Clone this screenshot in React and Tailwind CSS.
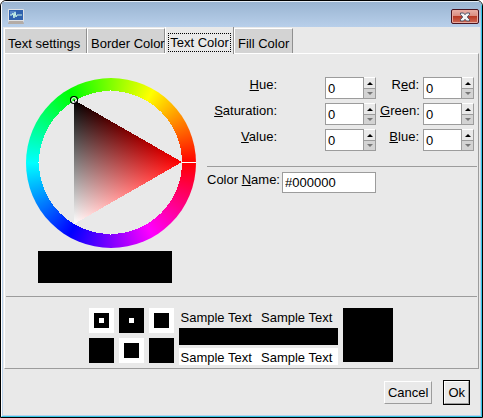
import React, { useState } from "react";

function AppIcon() {
  return (
    <svg width="16" height="16" viewBox="0 0 16 16" aria-hidden="true">
      <rect x="0" y="0" width="16" height="13" rx="1" fill="#dfe2e5" />
      <rect x="1" y="1" width="14" height="10" fill="#2f62ae" />
      <rect x="2" y="2" width="6" height="4" fill="#5585c6" />
      <path d="M1 12h14l1 3H0z" fill="#b4aca6" />
      <path d="M2 6h2l1-2 1 5 1-6 1 5 1-2h5" fill="none" stroke="#c9f3e6" strokeWidth="1" />
    </svg>
  );
}

function CloseIcon() {
  return (
    <svg width="12" height="10" viewBox="0 0 12 10" aria-hidden="true">
      <path
        d="M1.5 1h3L6 2.7 7.5 1h3v1.5L8.3 5l2.2 2.5V9h-3L6 7.3 4.5 9h-3V7.5L3.7 5 1.5 2.5z"
        fill="#f4f4f4"
        stroke="#4c5468"
        strokeWidth="1"
      />
    </svg>
  );
}

function TitleBar() {
  return (
    <header className="flex h-[25px] shrink-0 items-center justify-between bg-linear-to-b from-[#9ab5d2] to-[#b8cfea] pt-[4px] pr-[2px] pl-[6px]">
      <AppIcon />
      <button
        type="button"
        aria-label="Close"
        className="flex h-[15px] w-[28px] items-center justify-center rounded-[2px] border border-[#4a1420] bg-[linear-gradient(#e8b0a8,#d98a7e_48%,#b83a26_50%,#cf6a56)] shadow-[inset_0_0_0_1px_#e8aaa0]"
      >
        <CloseIcon />
      </button>
    </header>
  );
}

const TABS = [
  { name: "Text settings", width: "w-[83px]" },
  { name: "Border Color", width: "w-[78px]" },
  { name: "Text Color", width: "w-[69px]" },
  { name: "Fill Color", width: "w-[59px]" },
];

function Tabs() {
  const [active, setActive] = useState("Text Color");
  return (
    <nav role="tablist" className="flex h-[26px] shrink-0 items-end pl-px">
      {TABS.map(({ name, width }) =>
        name === active ? (
          <button
            key={name}
            type="button"
            role="tab"
            aria-selected="true"
            className={
              "relative -mb-px h-[27px] border-r border-l border-r-[#909090] border-l-white bg-[#e9e9e9] px-[2px] pt-[4px] whitespace-nowrap " +
              width
            }
          >
            <span className="block h-[19px] border border-dotted border-black leading-[17px]">{name}</span>
          </button>
        ) : (
          <button
            key={name}
            type="button"
            role="tab"
            aria-selected="false"
            onClick={() => setActive(name)}
            className={
              "h-[25px] border-t border-r border-l border-t-white border-r-[#909090] border-l-white bg-[#d3d3d3] pt-[5px] pl-[3px] text-left whitespace-nowrap " +
              width
            }
          >
            {name}
          </button>
        ),
      )}
    </nav>
  );
}

function ColorWheel() {
  return (
    <div className="size-[170px] rounded-full bg-[conic-gradient(from_90deg,#f00,#f0f,#00f,#0ff,#0f0,#ff0,#f00)]">
      <svg width="170" height="170" viewBox="0 0 170 170" role="img" aria-label="Hue wheel">
        <defs>
          <linearGradient id="red" gradientUnits="userSpaceOnUse" x1="48" y1="22" x2="102" y2="115">
            <stop offset="0" stopColor="#000" />
            <stop offset="1" stopColor="#f00" />
          </linearGradient>
          <linearGradient id="cyan" gradientUnits="userSpaceOnUse" x1="102" y1="53" x2="48" y2="146">
            <stop offset="0" stopColor="#000" />
            <stop offset="1" stopColor="#0ff" />
          </linearGradient>
        </defs>
        <circle cx="84.5" cy="84.5" r="71.5" fill="#e9e9e9" shapeRendering="crispEdges" />
        <g className="isolate" shapeRendering="crispEdges">
          <path d="M48 22L156 84L48 146z" fill="url(#red)" />
          <path d="M48 22L156 84L48 146z" fill="url(#cyan)" className="mix-blend-screen" />
        </g>
        <rect x="156" y="84" width="14" height="1" fill="#fff" />
        <path d="M84 12h1v1h-1zM84 156h1v1h-1zM12 84h1v1h-1z" fill="#fff" />
        <circle cx="48" cy="22" r="3.5" fill="none" stroke="#000" strokeWidth="1.2" />
        <circle cx="48" cy="22" r="2.3" fill="none" stroke="#fff" />
      </svg>
    </div>
  );
}

function Arrow({ down }) {
  return (
    <svg width="6" height="3" viewBox="0 0 6 3" aria-hidden="true">
      {down ? <path d="M0 0h6L3 3z" fill="#777" /> : <path d="M0 3h6L3 0z" fill="#000" />}
    </svg>
  );
}

function Spin({ id, name, before, hot, after }) {
  const [value, setValue] = useState(0);
  return (
    <>
      <label htmlFor={id} className="text-right leading-[16px] whitespace-nowrap">
        {before}
        <u>{hot}</u>
        {after}
      </label>
      <div className="flex h-[22px]">
        <input
          id={id}
          type="text"
          value={value}
          onChange={(e) => setValue(Number(e.target.value) || 0)}
          className="h-[22px] w-[39px] rounded-none border border-[#9c9c9c] bg-white px-[2px] outline-none"
        />
        <div className="flex w-[12px] flex-col">
          <button
            type="button"
            aria-label={"Increase " + name}
            onClick={() => setValue(value + 1)}
            className="flex h-[11px] items-center justify-center border-t border-r border-t-white border-r-[#9c9c9c]"
          >
            <Arrow />
          </button>
          <button
            type="button"
            aria-label={"Decrease " + name}
            onClick={() => setValue(Math.max(0, value - 1))}
            className="flex h-[11px] items-center justify-center border-t border-r border-b border-[#9c9c9c] bg-[#d3d3d3]"
          >
            <Arrow down />
          </button>
        </div>
      </div>
    </>
  );
}

function ColorFields() {
  return (
    <form className="min-w-0 flex-1">
      <div className="flex gap-[4px] pr-[3px]">
        <div className="grid flex-1 grid-cols-[70px_51px] content-start justify-between gap-y-[4px]">
          <Spin id="hue" name="hue" before="" hot="H" after="ue:" />
          <Spin id="saturation" name="saturation" before="" hot="S" after="aturation:" />
          <Spin id="value" name="value" before="" hot="V" after="alue:" />
        </div>
        <div className="grid grid-cols-[39px_51px] content-start gap-x-[4px] gap-y-[4px]">
          <Spin id="red-level" name="red" before="R" hot="e" after="d:" />
          <Spin id="green-level" name="green" before="" hot="G" after="reen:" />
          <Spin id="blue-level" name="blue" before="" hot="B" after="lue:" />
        </div>
      </div>
      <hr className="mt-[15px] border-[#9c9c9c]" />
      <div className="mt-[5px] flex gap-[5px]">
        <label htmlFor="color-name" className="w-[70px] text-right leading-[16px] whitespace-nowrap">
          Color <u>N</u>ame:
        </label>
        <input
          id="color-name"
          type="text"
          defaultValue="#000000"
          className="h-[21px] w-[94px] rounded-none border border-[#9c9c9c] bg-white px-[2px] outline-none"
        />
      </div>
    </form>
  );
}

// Nested squares, from the outer fill to the centre fill.
function Swatch({ outer, middle, inner }) {
  return (
    <div className={"flex size-[25px] items-center justify-center " + outer}>
      <div className={"flex size-[15px] items-center justify-center " + middle}>
        <div className={"size-[5px] " + inner} />
      </div>
    </div>
  );
}

function SampleRow({ className }) {
  return (
    <div className={"grid h-[17px] grid-cols-2 px-[2px] leading-[19px] whitespace-nowrap " + className}>
      <span>Sample Text</span>
      <span className="pl-[3px]">Sample Text</span>
    </div>
  );
}

function Preview() {
  return (
    <section className="flex justify-center gap-[5px] pt-[11px] pr-[2px] pb-[3px]">
      <div className="grid grid-cols-3 content-start gap-[5px]">
        <Swatch outer="bg-white" middle="bg-black" inner="bg-white" />
        <Swatch outer="bg-black" middle="bg-black" inner="bg-white" />
        <Swatch outer="bg-white" middle="bg-black" inner="bg-black" />
        <Swatch outer="bg-black" middle="bg-black" inner="bg-black" />
        <Swatch outer="bg-white" middle="bg-black" inner="bg-black" />
        <Swatch outer="bg-black" middle="bg-black" inner="bg-black" />
      </div>
      <div className="flex w-[159px] flex-col gap-[3px]">
        <SampleRow className="" />
        <div className="h-[17px] bg-black" />
        <SampleRow className="bg-white" />
      </div>
      <div className="h-[54px] w-[50px] bg-black" />
    </section>
  );
}

export default function App() {
  return (
    <div className="flex h-screen flex-col bg-white font-['Liberation_Sans',Arial,sans-serif] text-[13px] leading-[16px] text-black">
      <div className="flex flex-1 flex-col overflow-hidden rounded-t-[6px] border border-black">
        <div className="flex flex-1 flex-col rounded-t-[5px] border border-t-[#e4edf6] border-r-[#35c5e6] border-b-[#35c5e6] border-l-white bg-[#b9d1ea]">
          <TitleBar />
          <div className="mx-px mb-px flex flex-1 flex-col bg-[#e9e9e9]">
            <Tabs />
            <main className="mx-px border border-t-white border-r-[#9c9c9c] border-b-[#9c9c9c] border-l-white">
              <div className="flex gap-[11px] pt-[23px] pr-px pl-[21px]">
                <div className="flex shrink-0 flex-col gap-[3px] pt-px">
                  <ColorWheel />
                  <div className="ml-[12px] h-[32px] w-[134px] bg-black" />
                </div>
                <ColorFields />
              </div>
              <hr className="mx-px mt-[13px] border-[#9c9c9c]" />
              <Preview />
            </main>
            <footer className="flex items-center justify-end gap-[11px] pt-[11px] pr-[10px]">
              <button
                type="button"
                className="h-[23px] border border-t-white border-r-[#9c9c9c] border-b-[#9c9c9c] border-l-white px-[3px]"
              >
                Cancel
              </button>
              <button type="button" className="h-[25px] border border-black p-0">
                <span className="block h-[23px] border border-t-white border-r-[#9c9c9c] border-b-[#9c9c9c] border-l-white px-[3px] leading-[21px]">
                  Ok
                </span>
              </button>
            </footer>
          </div>
        </div>
      </div>
    </div>
  );
}
